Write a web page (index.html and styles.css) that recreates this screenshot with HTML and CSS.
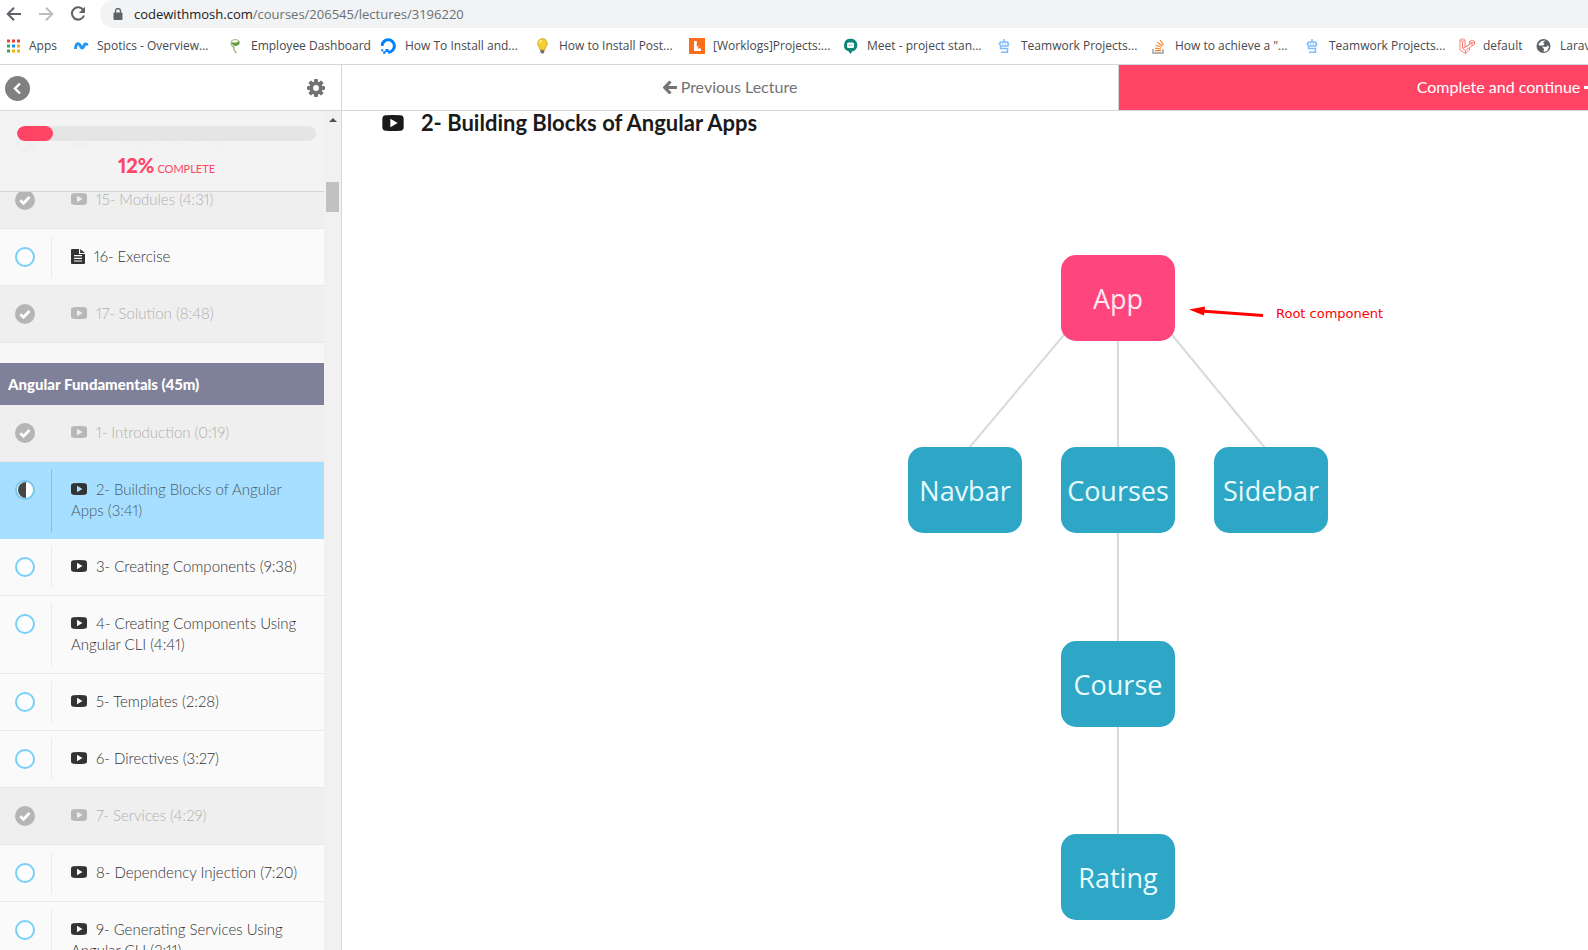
FILE: index.html
```html
<!DOCTYPE html>
<html lang="en">
<head>
<meta charset="utf-8">
<title>2- Building Blocks of Angular Apps</title>
<link rel="stylesheet" href="styles.css">
</head>
<body>
<svg class="sprite" aria-hidden="true">
  <symbol id="i-video" viewBox="0 0 16 12"><path fill-rule="evenodd" d="M2.500 0.200 Q8 -0.200 13.500 0.200 Q16 0.300 16 3 V9 Q16 11.700 13.500 11.800 Q8 12.200 2.500 11.800 Q0 11.700 0 9 V3 Q0 0.300 2.500 0.200 Z M6 2.800 V9.200 L11.500 6 Z"/></symbol>
  <symbol id="i-doc" viewBox="0 0 14 15"><path fill-rule="evenodd" d="M1 0 H8 V5 H14 V14 Q14 15 13 15 H1 Q0 15 0 14 V1 Q0 0 1 0 Z M3 6 V7.200 H11 V6 Z M3 8.700 V9.900 H11 V8.700 Z M3 11.400 V12.600 H11 V11.400 Z"/><path d="M9.200 0 L14 4 H9.200 Z"/></symbol>
  <symbol id="i-done" viewBox="0 0 20 20"><circle cx="10" cy="10" r="10" fill="#b5b5b5"/><path d="M5.300 10.300 L8.500 13.300 L14.500 7" fill="none" stroke="#fff" stroke-width="2.800"/></symbol>
  <symbol id="i-open" viewBox="0 0 20 20"><circle cx="10" cy="10" r="9" fill="#fbfdfe" stroke="#78d0f9" stroke-width="2"/></symbol>
  <symbol id="i-half" viewBox="0 0 20 20"><circle cx="10" cy="10" r="9" fill="#fff" stroke="#78c8ee" stroke-width="2"/><path d="M11 2 A8 8 0 1 0 11 18 Z" fill="#464646"/></symbol>
  <symbol id="i-larrow" viewBox="0 0 14 14"><path d="M14 7.500 H2 M7.500 1.500 L1.700 7.500 L7.500 13.500" fill="none" stroke="currentColor" stroke-width="3"/></symbol>
  <symbol id="i-team" viewBox="0 0 16 16"><g fill="none" stroke="#7fbafb" stroke-width="1.500"><path d="M7 1 V3.500 M4 4 H10 Q11 4 11 5 V8 H4 Q3 8 3 7 V5 Q3 4 4 4 M1.500 5.800 H3 M11 5.800 H12.500 M3.500 8 V10.500 H10.500 V14.200 H4"/><path d="M5.200 6 H6.200 M7.800 6 H8.800"/></g></symbol>
</svg>

<div class="browser">
  <div class="toolbar">
    <button class="nav-btn" aria-label="Back"><svg viewBox="0 0 16 16"><path d="M15 8 H2 M8 1.700 L1.700 8 L8 14.300" fill="none" stroke="#5f6368" stroke-width="2"/></svg></button>
    <button class="nav-btn" aria-label="Forward"><svg viewBox="0 0 16 16"><path d="M1 8 H14 M8 1.700 L14.300 8 L8 14.300" fill="none" stroke="#babcbe" stroke-width="2"/></svg></button>
    <button class="nav-btn" aria-label="Reload"><svg viewBox="0 0 16 16"><path d="M13.300 4 A6.200 6.200 0 1 0 14 9.500" fill="none" stroke="#5f6368" stroke-width="2.100"/><path d="M15 0.800 V7 H8.800 Z" fill="#5f6368"/></svg></button>
    <div class="omnibox">
      <svg class="lock" viewBox="0 0 10 12"><rect x="0.500" y="4.500" width="9" height="7.500" rx="1" fill="#5f6368"/><path d="M2.500 5 V3 A2.500 2.500 0 0 1 7.500 3 V5" fill="none" stroke="#5f6368" stroke-width="1.300"/></svg>
      <span class="url"><span class="host">codewithmosh.com</span>/courses/206545/lectures/3196220</span>
    </div>
  </div>
  <nav class="bookmarks" aria-label="Bookmarks">
    <a class="bm bm-apps" href="#"><svg viewBox="0 0 16 16"><path fill="#ea4335" d="M2 1.500h3v3h-3zM7 1.500h3v3h-3zM12 1.500h3v3h-3z"/><path fill="#34a853" d="M2 6.500h3v3h-3zM2 11.500h3v3h-3z"/><path fill="#1a8cff" d="M7 6.500h3v3h-3z"/><path fill="#f5ad0c" d="M12 6.500h3v3h-3zM7 11.500h3v3h-3zM12 11.500h3v3h-3z"/></svg><span>Apps</span></a>
    <a class="bm" href="#"><svg viewBox="0 0 16 16"><path d="M2.500 11 C3 4 6 5 7.500 8 C9 12 10.500 9 11 7.500 C12 5 14 6 14 7.500" fill="none" stroke="#2196f3" stroke-width="3"/></svg><span>Spotics - Overview...</span></a>
    <a class="bm" href="#"><svg viewBox="0 0 16 16"><path d="M9.500 15 C7 13 6.500 10.500 7 8" fill="none" stroke="#8db371" stroke-width="1.300"/><path d="M7 9.500 C3 7 3 2 8 1.500 C12 1.500 13 4 11.500 7" fill="none" stroke="#9bbf80" stroke-width="1.100"/><path d="M4.500 4 Q9 6 12.300 3 Q13 7.500 8.500 8 Q4.800 7.500 4.500 4Z" fill="#629c3c"/></svg><span>Employee Dashboard</span></a>
    <a class="bm" href="#"><svg viewBox="0 0 16 16"><path d="M1 8 A6.200 6.200 0 1 1 7 14.200" fill="none" stroke="#0080ff" stroke-width="3"/><path fill="#0080ff" d="M4.500 11h3v3h-3zM2.200 13.300h2.400v2.400H2.200zM0.200 11.300h2v2h-2z"/></svg><span>How To Install and...</span></a>
    <a class="bm" href="#"><svg viewBox="0 0 16 16"><path d="M7 0.500 A5 5 0 0 1 10.800 9 L9.600 12 H5 L4.200 9 A5 5 0 0 1 7 0.500Z" fill="#f7cf2b" stroke="#b99a2b" stroke-width="0.700"/><path d="M5 12 H9.600 L9 15 Q7.300 16 5.800 15 Z" fill="#77736a"/><path d="M4.600 5 Q5 2.700 7 2.500" stroke="#fff7b0" stroke-width="1.600" fill="none"/></svg><span>How to Install Post...</span></a>
    <a class="bm" href="#"><svg viewBox="0 0 16 16"><path fill="#fd6d17" d="M0 0h16v16H0z"/><path d="M5 3 H7.800 V9 L9.500 7.500 L9 10.500 H12 V13 H5 Z" fill="#fff"/></svg><span>[Worklogs]Projects:...</span></a>
    <a class="bm" href="#"><svg viewBox="0 0 16 16"><path d="M7.500 0.800 A6.400 6.400 0 0 1 9 13.500 L7.500 16 L5.500 13.300 A6.400 6.400 0 0 1 7.500 0.800Z" fill="#0a8776"/><rect x="4" y="4.500" width="7" height="5.400" rx="1.500" fill="#fff"/><path d="M5.500 7.200h4" stroke="#8ac3ba" stroke-width="1.200"/></svg><span>Meet - project stan...</span></a>
    <a class="bm" href="#"><svg><use href="#i-team"/></svg><span>Teamwork Projects...</span></a>
    <a class="bm" href="#"><svg viewBox="0 0 16 16"><path d="M2 11 V15 H12 V11" fill="none" stroke="#9a9c9f" stroke-width="1.400"/><path d="M4 12.700 H10 M4.100 10.200 L10.100 11 M4.800 7.300 L10.500 9.300 M6.500 4.500 L11.500 8 M9 2 L12.500 7" fill="none" stroke="#f48024" stroke-width="1.200"/></svg><span>How to achieve a "...</span></a>
    <a class="bm" href="#"><svg><use href="#i-team"/></svg><span>Teamwork Projects...</span></a>
    <a class="bm bm-short" href="#"><svg viewBox="0 0 16 16"><path d="M0.700 2 L3.500 0.700 L6 2 V9 L10.500 6.500 V3.500 L13 2 L15.500 3.500 V6.500 L10.500 9.500 V12 L6.500 15.500 L1 12 V2 L3.500 3.500 L6 2 M3.500 3.500 V10.500 L10.500 6.500 L13 5 L15.500 3.500 M10.500 3.500 L13 5 V7.500 M3.500 10.500 L6.500 12.500 L10.500 9.500 M6.500 12.500 V15" fill="none" stroke="#f9837c"/></svg><span>default</span></a>
    <a class="bm" href="#"><svg viewBox="0 0 16 16"><circle cx="7.500" cy="8" r="7" fill="#5f6368"/><path d="M9.500 2.500 L7 4.500 L8.500 6 L7 7.500 H3 L2.500 6 L5.500 3 Z M6 8.500 L10 9 L12 7.500 L13 9 L11 13 L7.500 14 L8 11 Z" fill="#fff"/></svg><span>Laravel</span></a>
  </nav>
</div>

<div class="app">
  <header class="topbar">
    <div class="course-tools">
      <button class="round-btn" aria-label="Back to course"><svg viewBox="0 0 25 25"><path d="M15 7.500 L10 12.500 L15 17.500" fill="none" stroke="#fff" stroke-width="2.400"/></svg></button>
      <button class="gear-btn" aria-label="Settings"><svg viewBox="0 0 18 18"><g fill="#737373"><rect x="7" y="0" width="4" height="18" rx="1"/><rect x="0" y="7" width="18" height="4" rx="1"/><rect x="7" y="0" width="4" height="18" rx="1" transform="rotate(45 9 9)"/><rect x="7" y="0" width="4" height="18" rx="1" transform="rotate(-45 9 9)"/><circle cx="9" cy="9" r="6.600"/></g><circle cx="9" cy="9" r="2.900" fill="#fff"/></svg></button>
    </div>
    <a class="prev" href="#"><svg><use href="#i-larrow"/></svg>Previous Lecture</a>
    <a class="next" href="#">Complete and continue<svg class="flip"><use href="#i-larrow"/></svg></a>
  </header>

  <div class="columns">
    <aside class="sidebar">
      <div class="outline">
        <div class="progress-head">
          <div class="track" role="progressbar" aria-valuenow="12" aria-label="Course progress"><div class="fill" style="width:12%"></div></div>
          <p class="percent"><strong>12%</strong> COMPLETE</p>
        </div>
        <ul class="lectures">
          <li class="lec done"><svg class="state"><use href="#i-done"/></svg><a href="#"><svg class="kind"><use href="#i-video"/></svg>14- Properties (5:18)</a></li>
          <li class="lec done"><svg class="state"><use href="#i-done"/></svg><a href="#"><svg class="kind"><use href="#i-video"/></svg>15- Modules (4:31)</a></li>
          <li class="lec"><svg class="state"><use href="#i-open"/></svg><a href="#"><svg class="kind doc"><use href="#i-doc"/></svg>16- Exercise</a></li>
          <li class="lec done"><svg class="state"><use href="#i-done"/></svg><a href="#"><svg class="kind"><use href="#i-video"/></svg>17- Solution (8:48)</a></li>
        </ul>
        <h2 class="section">Angular Fundamentals (45m)</h2>
        <ul class="lectures">
          <li class="lec done"><svg class="state"><use href="#i-done"/></svg><a href="#"><svg class="kind"><use href="#i-video"/></svg>1- Introduction (0:19)</a></li>
          <li class="lec current"><svg class="state"><use href="#i-half"/></svg><a href="#"><svg class="kind"><use href="#i-video"/></svg>2- Building Blocks of Angular Apps (3:41)</a></li>
          <li class="lec"><svg class="state"><use href="#i-open"/></svg><a href="#"><svg class="kind"><use href="#i-video"/></svg>3- Creating Components (9:38)</a></li>
          <li class="lec"><svg class="state"><use href="#i-open"/></svg><a href="#"><svg class="kind"><use href="#i-video"/></svg>4- Creating Components Using Angular CLI (4:41)</a></li>
          <li class="lec"><svg class="state"><use href="#i-open"/></svg><a href="#"><svg class="kind"><use href="#i-video"/></svg>5- Templates (2:28)</a></li>
          <li class="lec"><svg class="state"><use href="#i-open"/></svg><a href="#"><svg class="kind"><use href="#i-video"/></svg>6- Directives (3:27)</a></li>
          <li class="lec done"><svg class="state"><use href="#i-done"/></svg><a href="#"><svg class="kind"><use href="#i-video"/></svg>7- Services (4:29)</a></li>
          <li class="lec"><svg class="state"><use href="#i-open"/></svg><a href="#"><svg class="kind"><use href="#i-video"/></svg>8- Dependency Injection (7:20)</a></li>
          <li class="lec"><svg class="state"><use href="#i-open"/></svg><a href="#"><svg class="kind"><use href="#i-video"/></svg>9- Generating Services Using Angular CLI (2:11)</a></li>
        </ul>
      </div>
      <div class="scrollbar" aria-hidden="true"><span class="up"></span><span class="thumb"></span></div>
    </aside>

    <main class="lecture">
      <h1 class="title"><svg><use href="#i-video"/></svg>2- Building Blocks of Angular Apps</h1>
      <div class="diagram">
        <svg class="links" viewBox="0 0 422 668" fill="none" stroke="#dadada" stroke-width="2"><path d="M210 80 V600"/><path d="M160 76 L61 194"/><path d="M260 76 L357 194"/></svg>
        <div class="node root n-app">App</div>
        <div class="node n-navbar">Navbar</div>
        <div class="node n-courses">Courses</div>
        <div class="node n-sidebar">Sidebar</div>
        <div class="node n-course">Course</div>
        <div class="node n-rating">Rating</div>
        <div class="note"><svg viewBox="0 0 75 12"><path d="M74 7.500 L12 3" stroke="#f00" stroke-width="3"/><path d="M0 1.500 L16 -1.500 L15 7.500 Z" fill="#f00"/></svg>Root component</div>
      </div>
    </main>
  </div>
</div>
</body>
</html>
```
FILE: styles.css
```css
* { box-sizing: border-box; }
body {
  margin: 0;
  height: 100vh;
  display: flex;
  flex-direction: column;
  overflow: hidden;
  background: #fff;
  font-family: Lato, "Open Sans", sans-serif;
  font-variant-numeric: proportional-nums;
  color: #333;
}
a { color: inherit; text-decoration: none; }
button { border: 0; padding: 0; background: none; display: flex; }
ul { list-style: none; margin: 0; padding: 0; }
.sprite { display: none; }

/* Browser chrome */
.browser {
  flex: none;
  border-bottom: 1px solid #d5d7db;
  font-family: "Open Sans", "Noto Sans", sans-serif;
  font-variant-numeric: normal;
}
.toolbar { display: flex; align-items: center; gap: 16px; height: 28px; padding-left: 6px; }
.nav-btn svg { width: 16px; height: 16px; }
.omnibox {
  flex: 1;
  display: flex;
  align-items: center;
  gap: 11px;
  height: 28px;
  margin-left: -2px;
  padding-left: 13px;
  background: #f1f3f4;
  border-radius: 14px 0 0 14px;
}
.lock { width: 10px; height: 12px; }
.url { font-size: 13px; color: #6c7074; }
.host { color: #202124; }
.bookmarks { display: flex; height: 36px; padding: 0 0 1px 5px; overflow: hidden; }
.bm {
  flex: 0 0 154px;
  display: flex;
  align-items: center;
  gap: 8px;
  font-size: 12px;
  white-space: nowrap;
  color: #46494d;
}
.bm svg { flex: none; width: 16px; height: 16px; }
.bm-apps { flex-basis: 68px; }
.bm-short { flex-basis: 77px; }

/* Course header; the course page is wider than the window */
.app { flex: 1; min-height: 0; width: calc(100vw + 308px); display: flex; flex-direction: column; }
.topbar {
  flex: none;
  display: grid;
  grid-template-columns: 342px 1fr 1fr;
  height: 46px;
  border-bottom: 1px solid #d5d7db;
  font-size: 16px;
}
.course-tools {
  display: flex;
  align-items: center;
  justify-content: space-between;
  padding: 1px 16px 0 5px;
  border-right: 1px solid #d5d7db;
}
.round-btn { border-radius: 50%; background: #808080; }
.round-btn svg { width: 25px; height: 25px; }
.gear-btn svg { width: 18px; height: 18px; }
.prev, .next { display: flex; align-items: center; justify-content: center; gap: 4px; padding-bottom: 2px; }
.prev { color: #737373; border-right: 1px solid #d5d7db; }
.next { background: #ff4465; color: #fff; }
.prev svg, .next svg { width: 14px; height: 14px; }
.flip { transform: scaleX(-1); }

.columns { flex: 1; min-height: 0; display: grid; grid-template-columns: 342px 1fr; }

/* Sidebar */
.sidebar { min-height: 0; display: flex; border-right: 1px solid #d5d7db; }
.outline { position: relative; flex: 1; overflow: hidden; padding-top: 4px; background: #f7f7f7; }
.progress-head {
  position: absolute;
  inset: 0 0 auto;
  padding: 15px 8px 12px 17px;
  background: rgba(242, 242, 242, 0.96);
  border-bottom: 1px solid #d5d5d5;
}
.track { height: 15px; border-radius: 8px; background: #e5e5e5; overflow: hidden; }
.fill { height: 15px; border-radius: 8px; background: #ff4465; }
.percent {
  display: flex;
  align-items: baseline;
  justify-content: center;
  gap: 3px;
  margin: 14px 0 0;
  font-size: 11px;
  line-height: 20px;
  color: #ff4465;
}
.percent strong { font-size: 20px; font-weight: 900; }
.lec {
  display: flex;
  align-items: stretch;
  padding: 7px 0;
  background: #fafafa;
  border-bottom: 1px solid #e8e8e8;
}
.lec .state { flex: none; width: 20px; height: 20px; margin: 11px 16px 0 15px; }
.lec a {
  flex: 1;
  padding: 10px 24px 11px 19px;
  border-left: 1px solid #ebebeb;
  font-size: 15px;
  font-weight: 300;
  line-height: 21px;
  color: #333;
}
.kind { width: 16px; height: 12px; margin-right: 9px; fill: #333; }
.kind.doc { width: 14px; height: 15px; margin-right: 9px; vertical-align: -2px; }
.lec.done { background: #efefef; }
.lec.done a { color: #b0b0b0; border-color: #ededed; }
.lec.done .kind { fill: #b8b8b8; }
.lec.current { background: #a6dfff; border-bottom: 0; }
.lec.current a { color: #4c5a63; border-color: #85bfdf; }
.section {
  margin: 20px 0 0;
  padding: 0 8px;
  font-size: 15px;
  font-weight: 900;
  line-height: 42px;
  color: #fff;
  background: #7f819b;
}
.scrollbar { flex: none; width: 17px; padding: 7px 2px; background: #f1f1f1; }
.up { display: block; width: 8px; margin: 0 auto; border: 4px solid transparent; border-top: 0; border-bottom-color: #505050; }
.thumb { display: block; height: 30px; margin-top: 60px; background: #c1c1c1; }

/* Lecture */
.lecture { min-width: 0; }
.title {
  display: flex;
  align-items: center;
  gap: 17px;
  margin: 0;
  padding-left: 40px;
  font-size: 22px;
  font-weight: 700;
  line-height: 24px;
  color: #1a1a1a;
}
.title svg { width: 22px; height: 16px; fill: #1a1a1a; }
.diagram { position: relative; width: 422px; height: 668px; margin: 119px auto 0; font-family: "Open Sans", "Noto Sans", sans-serif; }
.links { position: absolute; inset: 0; width: 422px; height: 668px; }
.node {
  position: absolute;
  display: flex;
  align-items: center;
  justify-content: center;
  width: 114px;
  height: 86px;
  padding-top: 2px;
  border-radius: 15px;
  background: #2ea6c5;
  font-size: 27px;
  line-height: 32px;
  color: #e8fbff;
}
.node.root { background: #ff467c; color: #ffe8f2; }
.n-app { left: 153px; top: 1px; }
.n-navbar { left: 0; top: 193px; }
.n-courses { left: 153px; top: 193px; }
.n-sidebar { left: 306px; top: 193px; }
.n-course { left: 153px; top: 387px; }
.n-rating { left: 153px; top: 580px; }
.note {
  position: absolute;
  left: 281px;
  top: 50px;
  display: flex;
  align-items: center;
  gap: 12px;
  font-family: "DejaVu Sans", sans-serif;
  font-size: 13px;
  line-height: 20px;
  white-space: nowrap;
  color: #f00;
}
.note svg { width: 75px; height: 12px; overflow: visible; }
```
